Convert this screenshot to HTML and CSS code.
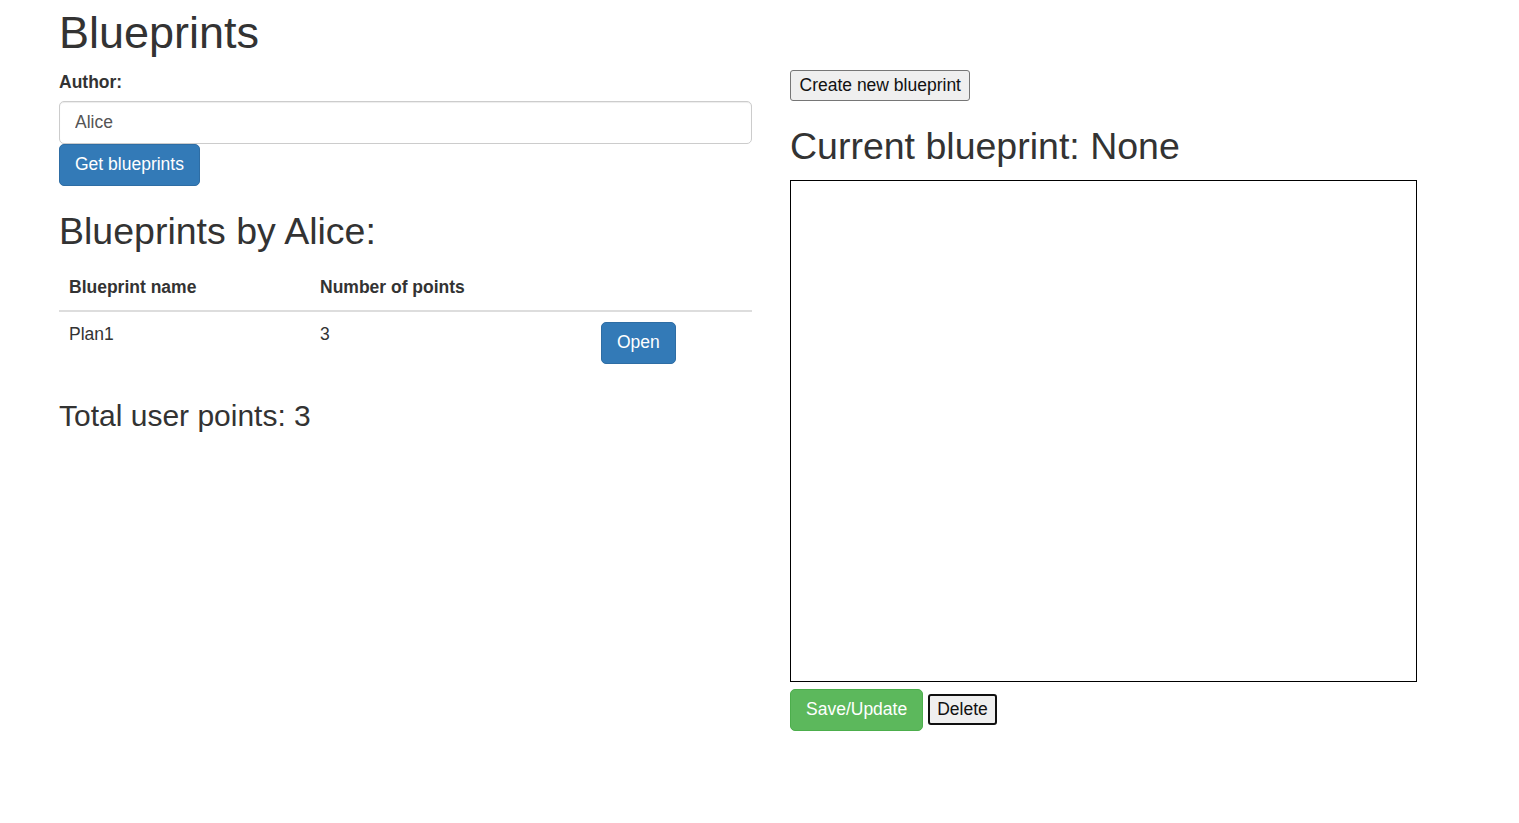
FILE: index.html
```html
<!DOCTYPE html>
<html lang="en">
<head>
<meta charset="utf-8">
<title>Blueprints</title>
<link rel="stylesheet" href="styles.css">
</head>
<body>
<div class="page">
  <h1 class="title">Blueprints</h1>
  <div class="row">
    <div class="col-left">
      <label class="label" for="author">Author:</label>
      <input id="author" class="input" type="text" value="Alice">
      <button class="btn btn-primary">Get blueprints</button>
      <h2 class="subtitle">Blueprints by Alice:</h2>
      <table class="table">
        <thead>
          <tr>
            <th class="c1">Blueprint name</th>
            <th class="c2">Number of points</th>
            <th class="c3"></th>
          </tr>
        </thead>
        <tbody>
          <tr>
            <td>Plan1</td>
            <td>3</td>
            <td><button class="btn btn-primary">Open</button></td>
          </tr>
        </tbody>
      </table>
      <h3 class="total">Total user points: 3</h3>
    </div>
    <div class="col-right">
      <button class="plain-btn">Create new blueprint</button>
      <h2 class="subtitle">Current blueprint: None</h2>
      <canvas class="canvas" width="625" height="500"></canvas>
      <div class="actions">
        <button class="btn btn-success">Save/Update</button>
        <button class="plain-btn focused">Delete</button>
      </div>
    </div>
  </div>
</div>
</body>
</html>
```

FILE: styles.css
```css
html, body {
  margin: 0;
  padding: 0;
  background: #fff;
}
body {
  font-family: "Liberation Sans", Arial, Helvetica, sans-serif;
  font-size: 17.5px;
  line-height: 25px;
  color: #333;
}
.page {
  padding-left: 59px;
}
.title {
  margin: 7.5px 0 12.5px;
  font-size: 45px;
  line-height: 49.5px;
  font-weight: 500;
}
.row {
  display: flex;
  gap: 38px;
}
.col-left {
  width: 693px;
  flex: none;
}
.col-right {
  width: 690px;
  flex: none;
}
.label {
  display: block;
  font-weight: bold;
  margin-bottom: 6.25px;
}
.input {
  display: block;
  box-sizing: border-box;
  width: 100%;
  height: 43px;
  padding: 7.5px 15px;
  font-family: inherit;
  font-size: 17.5px;
  line-height: 25px;
  color: #555;
  background: #fff;
  border: 1px solid #ccc;
  border-radius: 5px;
  box-shadow: inset 0 1px 1px rgba(0, 0, 0, .075);
  margin: 0;
}
.btn {
  display: inline-block;
  margin: 0;
  padding: 7.5px 15px;
  font-family: inherit;
  font-size: 17.5px;
  line-height: 25px;
  border: 1px solid transparent;
  border-radius: 5px;
  color: #fff;
  cursor: pointer;
  vertical-align: middle;
}
.btn-primary {
  background: #337ab7;
  border-color: #2e6da4;
}
.btn-success {
  background: #5cb85c;
  border-color: #4cae4c;
}
.subtitle {
  margin: 25px 0 12.5px;
  font-size: 37.5px;
  line-height: 41.25px;
  font-weight: 500;
}
.table {
  width: 100%;
  border-collapse: collapse;
  border-spacing: 0;
  margin-bottom: 25px;
}
.table th {
  text-align: left;
  font-weight: bold;
  padding: 10px;
  line-height: 25px;
  vertical-align: bottom;
  border-bottom: 2px solid #ddd;
}
.table td {
  padding: 10px;
  line-height: 25px;
  vertical-align: top;
  border-top: 1px solid #ddd;
}
.c1 { width: 231px; }
.c2 { width: 261px; }
.c3 { width: 141px; }
.total {
  margin: 25px 0 12.5px;
  font-size: 30px;
  line-height: 33px;
  font-weight: 500;
}
.plain-btn {
  display: inline-block;
  margin: 0;
  font-family: inherit;
  font-size: 17.5px;
  line-height: 25px;
  color: #111;
  background: #efefef;
  border: 1px solid #767676;
  border-radius: 3px;
  padding: 2px 8.5px;
  vertical-align: middle;
}
.col-right > .plain-btn {
  margin-top: 0.5px;
}
.focused {
  border: 2px solid #101010;
  padding: 1px 7px;
}
.canvas {
  display: block;
  border: 1px solid #000;
  background: #fff;
}
.actions {
  display: flex;
  align-items: center;
  gap: 5px;
  margin-top: 7px;
}
```
